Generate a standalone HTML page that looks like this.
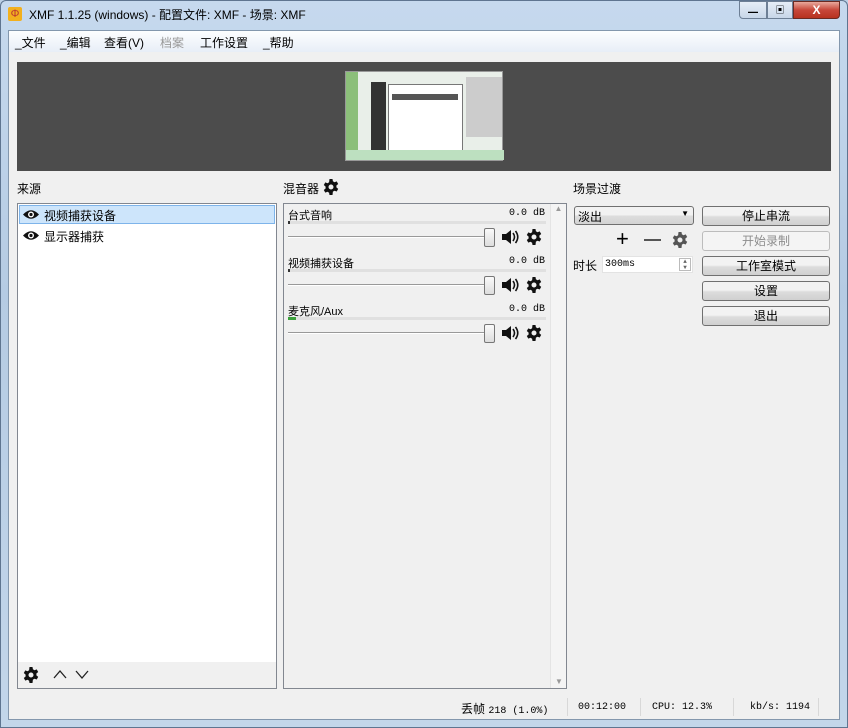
<!DOCTYPE html><html><head><meta charset="utf-8"><style>
*{margin:0;padding:0;box-sizing:border-box}
body{width:848px;height:728px;overflow:hidden;background:#bcd0e6;font-family:"Liberation Sans","Noto Sans CJK SC",sans-serif;font-size:12px;color:#000;position:relative}
.a{position:absolute}
.frame{left:0;top:0;width:848px;height:728px;background:linear-gradient(#c6d9ee,#b5cbe3 40%,#c3d6ea);border:1px solid #5f7590;border-radius:6px 6px 0 0}
.client{left:8px;top:30px;width:832px;height:690px;background:#f0f0f0;border:1px solid #8397ad}
.menu{left:9px;top:31px;width:830px;height:21px;background:linear-gradient(#fdfeff,#e8eef7);}
.menu span{position:absolute;top:3px;font-size:12px}
.btn{position:absolute;left:702px;width:128px;height:20px;border:1px solid #707070;border-radius:3px;background:linear-gradient(#f2f2f2 45%,#dcdcdc 55%,#d0d0d0);text-align:center;line-height:18px;font-size:12px}
.mono{font-family:"Liberation Mono","Noto Sans CJK SC",monospace;font-size:10px}
.gear{fill:#111}
</style></head><body>
<div class="a frame"></div>
<div class="a" style="left:8px;top:7px;width:14px;height:14px;background:#f2b01e;border-radius:2px;color:#b33;font-size:11px;line-height:14px;text-align:center">Φ</div>
<div class="a" style="left:29px;top:6px;font-size:12px">XMF 1.1.25 (windows) - 配置文件: XMF - 场景: XMF</div>
<div class="a" style="left:739px;top:1px;width:28px;height:18px;border:1px solid #6d7f95;border-radius:0 0 0 4px;background:linear-gradient(#e6eef8,#c7d6e8);text-align:center;font-size:10px;line-height:16px">▁</div>
<div class="a" style="left:767px;top:1px;width:26px;height:18px;border:1px solid #6d7f95;background:linear-gradient(#e6eef8,#c7d6e8);text-align:center;font-size:9px;line-height:16px">▣</div>
<div class="a" style="left:793px;top:1px;width:47px;height:18px;border:1px solid #6b2a22;border-radius:0 0 4px 0;background:linear-gradient(#e9a99c,#c7473a 50%,#b7321f);color:#fff;text-align:center;font-weight:bold;line-height:16px">X</div>
<div class="a client"></div>
<div class="a menu"><span style="left:6px">_文件</span><span style="left:51px">_编辑</span><span style="left:95px">查看(V)</span><span style="left:151px;color:#999">档案</span><span style="left:191px">工作设置</span><span style="left:254px">_帮助</span></div>
<div class="a" style="left:17px;top:62px;width:814px;height:109px;background:#4c4c4c"></div>
<div class="a" style="left:345px;top:71px;width:158px;height:90px;background:#e9efe9;border:1px solid #999">
 <div class="a" style="left:0;top:0;width:12px;height:88px;background:#8cbf7a"></div>
 <div class="a" style="left:25px;top:10px;width:15px;height:75px;background:#333"></div>
 <div class="a" style="left:42px;top:12px;width:75px;height:70px;background:#fff;border:1px solid #777"></div>
 <div class="a" style="left:46px;top:22px;width:66px;height:6px;background:#555"></div>
 <div class="a" style="left:120px;top:5px;width:36px;height:60px;background:#ccc"></div>
 <div class="a" style="left:0;top:78px;width:158px;height:10px;background:#bde0c0"></div>
</div>
<div class="a" style="left:17px;top:180px">来源</div>
<div class="a" style="left:283px;top:180px">混音器</div>
<svg class="a" style="left:323px;top:179px" width="16" height="16" viewBox="0 0 16 16"><path class="gear" d="M6.5 0h3l.4 2.3 1.6.9 2.2-.8 1.5 2.6-1.8 1.5v1.9l1.8 1.5-1.5 2.6-2.2-.8-1.6.9L9.5 16h-3l-.4-2.3-1.6-.9-2.2.8L.8 11l1.8-1.5V7.6L.8 6l1.5-2.6 2.2.8 1.6-.9zM8 5.5a2.5 2.5 0 100 5 2.5 2.5 0 000-5z"/></svg>
<div class="a" style="left:573px;top:180px">场景过渡</div>
<!-- sources -->
<div class="a" style="left:17px;top:203px;width:260px;height:486px;background:#fff;border:1px solid #828790"></div>
<div class="a" style="left:19px;top:205px;width:256px;height:19px;background:#cde5fb;border:1px solid #7eb4ea"></div>
<svg class="a" style="left:23px;top:209px" width="16" height="11" viewBox="0 0 16 11"><path d="M0 5.5Q8-3 16 5.5Q8 14 0 5.5z" fill="#111"/><circle cx="8" cy="5.5" r="3" fill="#fff"/><circle cx="8" cy="5.5" r="1.6" fill="#111"/></svg>
<div class="a" style="left:44px;top:207px">视频捕获设备</div>
<svg class="a" style="left:23px;top:230px" width="16" height="11" viewBox="0 0 16 11"><path d="M0 5.5Q8-3 16 5.5Q8 14 0 5.5z" fill="#111"/><circle cx="8" cy="5.5" r="3" fill="#fff"/><circle cx="8" cy="5.5" r="1.6" fill="#111"/></svg>
<div class="a" style="left:44px;top:228px">显示器捕获</div>
<div class="a" style="left:18px;top:662px;width:258px;height:26px;background:#f0f0f0"></div>
<svg class="a" style="left:23px;top:667px" width="16" height="16" viewBox="0 0 16 16"><path class="gear" d="M6.5 0h3l.4 2.3 1.6.9 2.2-.8 1.5 2.6-1.8 1.5v1.9l1.8 1.5-1.5 2.6-2.2-.8-1.6.9L9.5 16h-3l-.4-2.3-1.6-.9-2.2.8L.8 11l1.8-1.5V7.6L.8 6l1.5-2.6 2.2.8 1.6-.9zM8 5.5a2.5 2.5 0 100 5 2.5 2.5 0 000-5z"/></svg>
<svg class="a" style="left:52px;top:668px" width="40" height="12"><path d="M2 10L8 3l6 7M24 3l6 7 6-7" fill="none" stroke="#222" stroke-width="1.3"/></svg>
<!-- mixer -->
<div class="a" style="left:283px;top:203px;width:284px;height:486px;background:#f0f0f0;border:1px solid #828790"></div>
<div class="a" style="left:550px;top:204px;width:16px;height:484px;background:#f4f4f4;border-left:1px solid #e4e4e4;color:#999;font-size:8px;text-align:center">▲<div style="position:absolute;bottom:2px;width:16px">▼</div></div>
<div id="mix"></div>
<!-- transition -->
<div class="a" style="left:574px;top:206px;width:120px;height:19px;border:1px solid #707070;border-radius:3px;background:linear-gradient(#f2f2f2 45%,#dcdcdc 55%,#d4d4d4);padding:1px 3px">淡出<span style="position:absolute;right:4px;top:2px;font-size:8px">▼</span></div>
<div class="a" style="left:616px;top:227px;font-size:22px;line-height:24px">+</div>
<div class="a" style="left:644px;top:239px;width:17px;height:2px;background:#555"></div>
<svg class="a" style="left:672px;top:232px" width="16" height="16" viewBox="0 0 16 16"><path fill="#555" d="M6.5 0h3l.4 2.3 1.6.9 2.2-.8 1.5 2.6-1.8 1.5v1.9l1.8 1.5-1.5 2.6-2.2-.8-1.6.9L9.5 16h-3l-.4-2.3-1.6-.9-2.2.8L.8 11l1.8-1.5V7.6L.8 6l1.5-2.6 2.2.8 1.6-.9zM8 5.5a2.5 2.5 0 100 5 2.5 2.5 0 000-5z"/></svg>
<div class="a" style="left:573px;top:257px">时长</div>
<div class="a mono" style="left:602px;top:256px;width:91px;height:17px;background:#fff;border:1px solid #e3e3e3;padding:2px 2px;font-size:10px">300ms<span style="position:absolute;right:1px;top:1px;width:12px;height:13px;border:1px solid #bbb;font-size:6px;line-height:6px;color:#666;text-align:center">▲<br>▼</span></div>
<div class="btn" style="top:206px">停止串流</div>
<div class="btn" style="top:231px;color:#8d8d8d;border-color:#bcbcbc;background:#f4f4f4">开始录制</div>
<div class="btn" style="top:256px">工作室模式</div>
<div class="btn" style="top:281px">设置</div>
<div class="btn" style="top:306px">退出</div>
<!-- status -->
<div class="a" style="left:461px;top:700px">丢帧 <span class="mono" style="font-size:10px">218 (1.0%)</span></div>
<div class="a" style="left:567px;top:698px;width:1px;height:18px;background:#d8d8d8"></div>
<div class="a mono" style="left:578px;top:702px">00:12:00</div>
<div class="a" style="left:640px;top:698px;width:1px;height:18px;background:#d8d8d8"></div>
<div class="a mono" style="left:652px;top:702px">CPU: 12.3%</div>
<div class="a" style="left:733px;top:698px;width:1px;height:18px;background:#d8d8d8"></div>
<div class="a mono" style="left:750px;top:702px">kb/s: 1194</div>
<div class="a" style="left:818px;top:698px;width:1px;height:18px;background:#d8d8d8"></div>
<script>
var n=["台式音响","视频捕获设备","麦克风/Aux"],h="";
for(var i=0;i<3;i++){var y=207+i*48;
h+='<div class="a" style="left:288px;top:'+y+'px;font-size:11px">'+n[i]+'</div>';
h+='<div class="a mono" style="left:509px;top:'+(y+1)+'px">0.0 dB</div>';
h+='<div class="a" style="left:288px;top:'+(y+14)+'px;width:258px;height:3px;background:#e0e0e0"></div>';
h+='<div class="a" style="left:288px;top:'+(y+14)+'px;width:'+(i==2?8:2)+'px;height:3px;background:'+(i==2?'#3aa03a':'#333')+'"></div>';
h+='<div class="a" style="left:288px;top:'+(y+29)+'px;width:200px;height:2px;border-top:1px solid #999;border-bottom:1px solid #fff"></div>';
h+='<div class="a" style="left:484px;top:'+(y+21)+'px;width:11px;height:19px;border:1px solid #777;border-radius:2px;background:linear-gradient(#fafafa,#ddd)"></div>';
h+='<svg class="a" style="left:501px;top:'+(y+22)+'px" width="18" height="16"><path d="M1 5h4l5-4v14l-5-4H1z" fill="#111"/><path d="M12 4q3 4 0 8M14.5 2q4.5 6 0 12" fill="none" stroke="#111" stroke-width="1.6"/></svg>';
h+='<svg class="a" style="left:526px;top:'+(y+22)+'px" width="16" height="16" viewBox="0 0 16 16"><path fill="#111" d="M6.5 0h3l.4 2.3 1.6.9 2.2-.8 1.5 2.6-1.8 1.5v1.9l1.8 1.5-1.5 2.6-2.2-.8-1.6.9L9.5 16h-3l-.4-2.3-1.6-.9-2.2.8L.8 11l1.8-1.5V7.6L.8 6l1.5-2.6 2.2.8 1.6-.9zM8 5.5a2.5 2.5 0 100 5 2.5 2.5 0 000-5z"/></svg>';}
document.getElementById("mix").outerHTML=h;
</script>
</body></html>
